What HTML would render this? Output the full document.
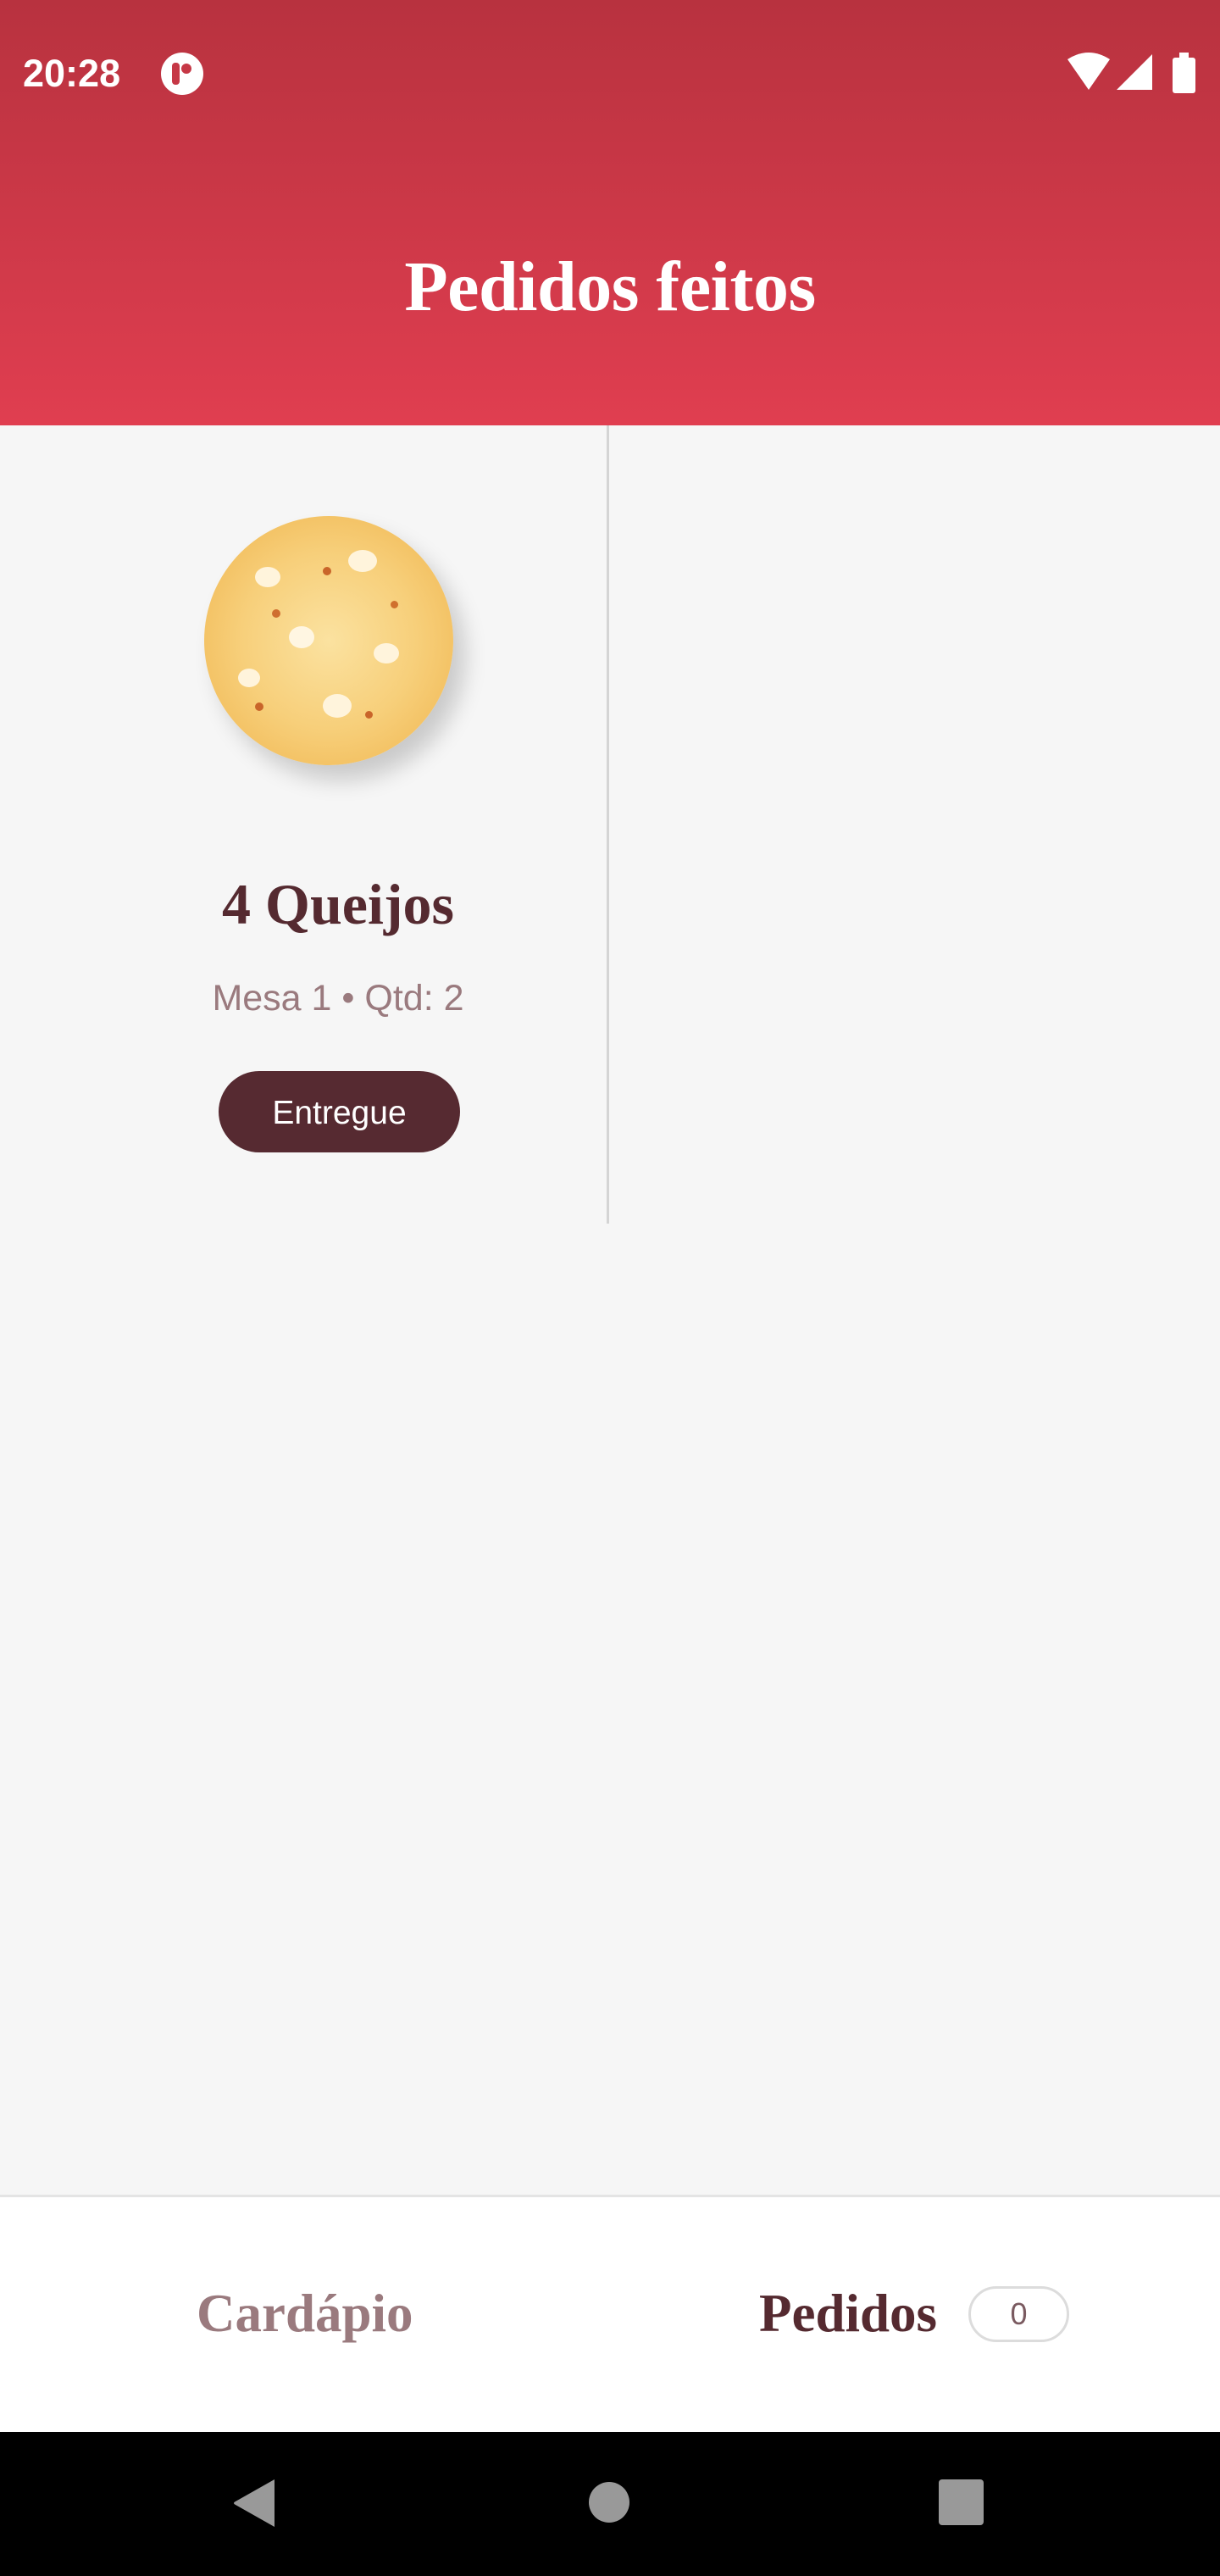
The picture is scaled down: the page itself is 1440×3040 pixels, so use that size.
<!DOCTYPE html>
<html><head><meta charset="utf-8"><style>
*{margin:0;padding:0;box-sizing:border-box}
body{width:1440px;height:3040px;background:#f6f6f6;position:relative;overflow:hidden;font-family:"Liberation Sans",sans-serif}
.hdr{position:absolute;left:0;top:0;width:1440px;height:502px;background:linear-gradient(#b8323f,#e03e50)}
.time{position:absolute;left:27px;top:61px;font-size:45px;font-weight:bold;color:#fff}
.title{position:absolute;left:0;width:1440px;top:290px;text-align:center;font-family:"Liberation Serif",serif;font-weight:bold;font-size:84px;color:#fff;letter-spacing:-0.5px}
.div{position:absolute;left:716px;top:502px;width:3px;height:942px;background:#d4d4d4}
.pizza{position:absolute;left:241px;top:609px;width:294px;height:294px;border-radius:50%;background:radial-gradient(circle,#fbe2a0 0%,#f7cf7a 50%,#f2bd5c 82%,#d9863a 93%,#b5652a 100%);box-shadow:14px 18px 26px rgba(0,0,0,.18)}
.spot{position:absolute;border-radius:50%}
.name{position:absolute;left:0;width:798px;top:1028px;text-align:center;font-family:"Liberation Serif",serif;font-weight:bold;font-size:68px;color:#552a30}
.meta{position:absolute;left:0;width:798px;top:1154px;text-align:center;font-size:43px;color:#9a7a7e}
.btn{position:absolute;left:258px;top:1264px;width:285px;height:96px;border-radius:48px;background:#562a31;color:#fff;font-size:39px;text-align:center;line-height:100px}
.nav{position:absolute;left:0;top:2590px;width:1440px;height:280px;background:#fff;border-top:3px solid #e4e4e4}
.n1{position:absolute;left:232px;top:2694px;font-family:"Liberation Serif",serif;font-weight:bold;font-size:63px;color:#9a7a7e}
.n2{position:absolute;left:896px;top:2694px;font-family:"Liberation Serif",serif;font-weight:bold;font-size:63px;color:#552a30}
.badge{position:absolute;left:1143px;top:2698px;width:119px;height:66px;border:3px solid #dcdcdc;border-radius:33px;text-align:center;line-height:60px;font-size:36px;color:#7a5a60}
.sys{position:absolute;left:0;top:2870px;width:1440px;height:170px;background:#000}
</style></head><body>
<div class="hdr">
<div class="time">20:28</div>
<svg style="position:absolute;left:190px;top:62px" width="50" height="50" viewBox="0 0 50 50"><circle cx="25" cy="25" r="25" fill="#fff"/><rect x="13" y="12" width="9" height="26" rx="4" fill="#c63846"/><circle cx="30" cy="19" r="6" fill="#c63846"/></svg>
<svg style="position:absolute;left:1258px;top:62px" width="156" height="48" viewBox="0 0 156 48"><path d="M2 8 Q27 -8 52 8 L27 44 Z" fill="#fff"/><path d="M60 44 L102 2 L102 44 Z" fill="#fff"/><rect x="126" y="6" width="27" height="42" rx="3" fill="#fff"/><rect x="134" y="0" width="11" height="8" fill="#fff"/></svg>
<div class="title">Pedidos feitos</div>
</div>
<div class="div"></div>
<div class="pizza">
<div class="spot" style="left:60px;top:60px;width:30px;height:24px;background:#fff4dc"></div>
<div class="spot" style="left:170px;top:40px;width:34px;height:26px;background:#fff4dc"></div>
<div class="spot" style="left:100px;top:130px;width:30px;height:26px;background:#fff6e2"></div>
<div class="spot" style="left:200px;top:150px;width:30px;height:24px;background:#fff4dc"></div>
<div class="spot" style="left:140px;top:210px;width:34px;height:28px;background:#fff4dc"></div>
<div class="spot" style="left:40px;top:180px;width:26px;height:22px;background:#fff4dc"></div>
<div class="spot" style="left:140px;top:60px;width:10px;height:10px;background:#c9652a"></div>
<div class="spot" style="left:80px;top:110px;width:10px;height:10px;background:#cf6e30"></div>
<div class="spot" style="left:60px;top:220px;width:10px;height:10px;background:#c9652a"></div>
<div class="spot" style="left:220px;top:100px;width:9px;height:9px;background:#d0702e"></div>
<div class="spot" style="left:190px;top:230px;width:9px;height:9px;background:#c9652a"></div>
</div>
<div class="name">4 Queijos</div>
<div class="meta">Mesa 1 • Qtd: 2</div>
<div class="btn">Entregue</div>
<div class="nav"></div>
<div class="n1">Cardápio</div>
<div class="n2">Pedidos</div>
<div class="badge">0</div>
<div class="sys">
<svg style="position:absolute;left:270px;top:52px" width="900" height="64" viewBox="0 0 900 64"><path d="M54 4 L54 60 L8 34 Q4 32 8 30 Z" fill="#999"/><circle cx="449" cy="31" r="24" fill="#999"/><rect x="838" y="4" width="53" height="54" rx="4" fill="#999"/></svg>
</div>
</body></html>
